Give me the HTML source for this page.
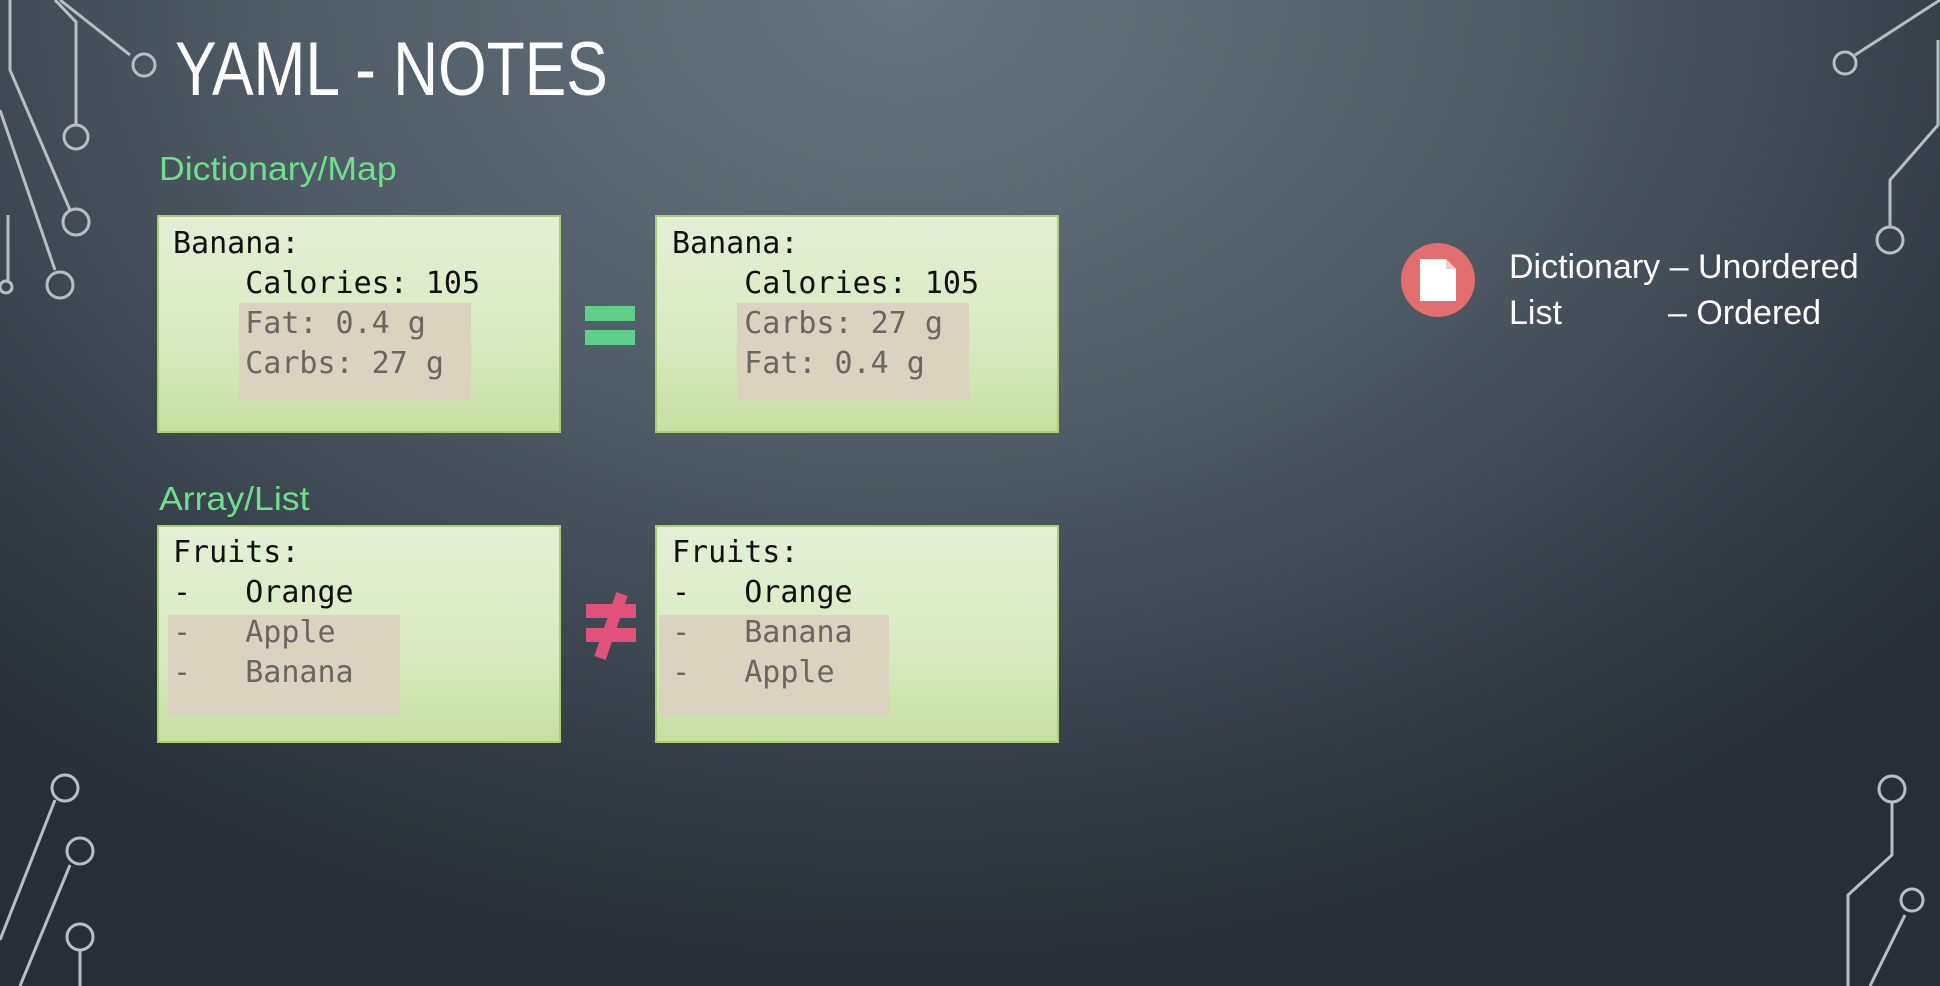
<!DOCTYPE html>
<html><head><meta charset="utf-8"><style>
body{margin:0;width:1940px;height:986px;overflow:hidden;position:relative;
background:radial-gradient(ellipse 1400px 1000px at 900px 0px,#68757f 0%,#4f5b66 45%,#333c45 80%,#272e36 100%);
font-family:"Liberation Sans",sans-serif;}
.t{position:absolute;color:#fff;}
.box{position:absolute;width:400px;height:214px;border:2px solid #a8d070;
background:linear-gradient(180deg,#e3efd6 0%,#d8eabf 60%,#c6e0a2 100%);}
.hl{position:absolute;background:#dccfc0;opacity:.9}
.m{position:absolute;font-family:"DejaVu Sans Mono","Liberation Mono",monospace;font-size:30px;color:#111;white-space:pre;line-height:40px}
.g{color:#6c6560}
.lab{position:absolute;color:#6ee08c;font-size:33px;transform-origin:0 0;transform:scaleX(1.08)}
</style></head><body>
<svg width="1940" height="986" style="position:absolute;left:0;top:0" fill="none" stroke="#b8bfc4" stroke-width="3">
<path d="M60 0 L130 55"/><circle cx="144" cy="65" r="11"/>
<path d="M55 0 L76 22 L76 125"/><circle cx="76" cy="137" r="12"/>
<path d="M10 0 L10 70 L70 210"/><circle cx="76" cy="222" r="13"/>
<path d="M0 110 L55 270"/><circle cx="60" cy="285" r="13"/>
<path d="M8 215 L8 280"/><circle cx="6" cy="287" r="6"/>
<path d="M1940 0 L1855 55"/><circle cx="1845" cy="63" r="11"/>
<path d="M1938 40 L1938 125 L1890 180 L1890 228"/><circle cx="1890" cy="240" r="13"/>
<path d="M55 800 L0 940"/><circle cx="65" cy="788" r="13"/>
<path d="M70 865 L20 986"/><circle cx="80" cy="851" r="13"/>
<path d="M80 950 L80 986"/><circle cx="80" cy="937" r="13"/>
<path d="M1892 803 L1892 855 L1848 895 L1848 986"/><circle cx="1892" cy="789" r="13"/>
<path d="M1905 915 L1870 986"/><circle cx="1912" cy="900" r="11"/>
</svg>
<div class="t" style="left:175px;top:26px;font-size:76px;transform-origin:0 0;transform:scaleX(0.82)">YAML - NOTES</div>
<div class="lab" style="left:159px;top:150px">Dictionary/Map</div>
<div class="lab" style="left:159px;top:480px">Array/List</div>

<div class="box" style="left:157px;top:215px"></div>
<div class="hl" style="left:239px;top:303px;width:232px;height:97px"></div>
<div class="m" style="left:173px;top:224px">Banana:
    Calories: 105
<span class="g">    Fat: 0.4 g
    Carbs: 27 g</span></div>

<div class="box" style="left:655px;top:215px"></div>
<div class="hl" style="left:737px;top:303px;width:232px;height:97px"></div>
<div class="m" style="left:672px;top:224px">Banana:
    Calories: 105
<span class="g">    Carbs: 27 g
    Fat: 0.4 g</span></div>

<div class="box" style="left:157px;top:525px"></div>
<div class="hl" style="left:168px;top:615px;width:232px;height:100px"></div>
<div class="m" style="left:173px;top:533px">Fruits:
-   Orange
<span class="g">-   Apple
-   Banana</span></div>

<div class="box" style="left:655px;top:525px"></div>
<div class="hl" style="left:659px;top:615px;width:230px;height:100px"></div>
<div class="m" style="left:672px;top:533px">Fruits:
-   Orange
<span class="g">-   Banana
-   Apple</span></div>

<div style="position:absolute;left:585px;top:306px;width:50px;height:15px;background:#5fcf8a"></div>
<div style="position:absolute;left:585px;top:330px;width:50px;height:15px;background:#5fcf8a"></div>
<svg style="position:absolute;left:580px;top:590px" width="62" height="72">
<rect x="6" y="14" width="50" height="14" fill="#e0527a"/>
<rect x="6" y="38" width="50" height="14" fill="#e0527a"/>
<path d="M42 4 L20 68" stroke="#e0527a" stroke-width="12"/>
</svg>

<svg style="position:absolute;left:1400px;top:242px" width="76" height="76">
<circle cx="38" cy="38" r="37" fill="#e26e70"/>
<path d="M20 17 H46 L56 27 V59 H20 Z" fill="#fff"/>
<path d="M46 17 V27 H56" fill="#e9d0d0"/>
</svg>
<div class="t" style="left:1509px;top:248px;font-size:34px;white-space:pre">Dictionary – Unordered</div>
<div class="t" style="left:1509px;top:294px;font-size:34px">List</div>
<div class="t" style="left:1668px;top:294px;font-size:34px">– Ordered</div>
</body></html>
